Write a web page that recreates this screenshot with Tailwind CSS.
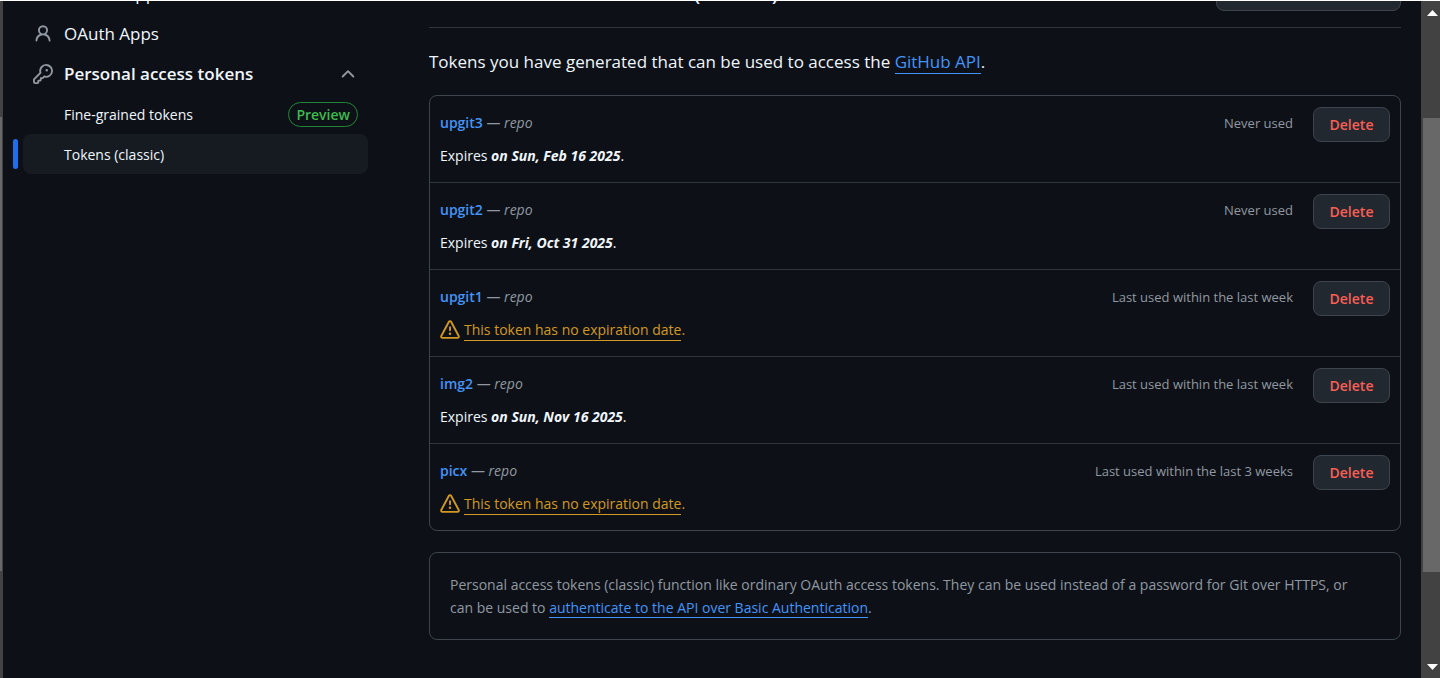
<!DOCTYPE html>
<html lang="en">
<head>
<meta charset="utf-8">
<title>Personal access tokens (classic)</title>
<script src="https://cdn.jsdelivr.net/npm/@tailwindcss/browser@4"></script>
</head>
<body class="flex h-screen flex-col overflow-hidden border-t border-white bg-[#0d1117] font-['Segoe_UI','Open_Sans',sans-serif] text-[14px] text-[#f0f6fc]">
<svg class="hidden">
  <symbol id="alert" viewBox="0 0 16 16"><path d="M6.457 1.047c.659-1.234 2.427-1.234 3.086 0l6.082 11.378A1.75 1.75 0 0 1 14.082 15H1.918a1.75 1.75 0 0 1-1.543-2.575Zm1.763.707a.25.25 0 0 0-.44 0L1.698 13.132a.25.25 0 0 0 .22.368h12.164a.25.25 0 0 0 .22-.368Zm.53 3.996v2.5a.75.75 0 0 1-1.5 0v-2.5a.75.75 0 0 1 1.5 0ZM9 11a1 1 0 1 1-2 0 1 1 0 0 1 2 0Z"/></symbol>
</svg>
<div class="flex min-h-0 flex-1">
  <div class="w-[3px] shrink-0 bg-[#424242] pt-[116px]"><div class="h-[454px] w-[2px] bg-[#686868]"></div></div>

  <nav class="w-[365px] shrink-0 overflow-hidden pl-5" aria-label="Developer settings">
    <ul class="-mt-[27px]">
      <li><a href="#" class="flex h-10 items-center pl-[41px] text-[17px]">GitHub Apps</a></li>
      <li><a href="#" class="flex h-10 items-center gap-[11px] pl-[10px] text-[17px]">
        <svg class="size-5 fill-[#9198a1]" viewBox="0 0 16 16"><path d="M10.561 8.073a6.005 6.005 0 0 1 3.432 5.142.75.75 0 1 1-1.498.07 4.5 4.5 0 0 0-8.99 0 .75.75 0 0 1-1.498-.07 6.004 6.004 0 0 1 3.431-5.142 3.999 3.999 0 1 1 5.123 0ZM10.5 5a2.5 2.5 0 1 0-5 0 2.5 2.5 0 0 0 5 0Z"/></svg>
        OAuth Apps</a></li>
      <li>
        <button class="flex h-10 w-full items-center gap-[11px] pr-[10px] pl-[10px] text-[17px] font-semibold" aria-expanded="true">
          <svg class="size-5 fill-[#9198a1]" viewBox="0 0 16 16"><path d="M10.5 0a5.499 5.499 0 1 1-1.288 10.848l-.932.932a.749.749 0 0 1-.53.22H7v.75a.749.749 0 0 1-.22.53l-.5.5a.749.749 0 0 1-.53.22H5v.75a.749.749 0 0 1-.22.53l-.5.5a.749.749 0 0 1-.53.22h-2A1.75 1.75 0 0 1 0 14.25v-2c0-.199.079-.389.22-.53l4.932-4.932A5.5 5.5 0 0 1 10.5 0Zm-4 5.5c-.001.431.069.86.205 1.269a.75.75 0 0 1-.181.768L1.5 12.56v1.69c0 .138.112.25.25.25h1.69l.06-.06v-1.19a.75.75 0 0 1 .75-.75h1.19l.06-.06v-1.19a.75.75 0 0 1 .75-.75h1.19l1.023-1.025a.75.75 0 0 1 .768-.18A4 4 0 1 0 6.5 5.5ZM11 6a1 1 0 1 1 0-2 1 1 0 0 1 0 2Z"/></svg>
          <span class="flex-1 text-left">Personal access tokens</span>
          <svg class="size-5 fill-[#9198a1]" viewBox="0 0 16 16"><path d="M3.22 10.53a.749.749 0 0 1 0-1.06l4.25-4.25a.749.749 0 0 1 1.06 0l4.25 4.25a.749.749 0 1 1-1.06 1.06L8 6.811 4.28 10.53a.749.749 0 0 1-1.06 0Z"/></svg>
        </button>
        <ul>
          <li><a href="#" class="flex h-10 items-center justify-between pr-[10px] pl-[41px]">Fine-grained tokens
            <span class="flex h-[25px] items-center rounded-full border border-[#238636] px-[7px] font-semibold text-[#3fb950]">Preview</span></a></li>
          <li class="relative"><span class="absolute top-[5px] -left-[10px] h-[30px] w-[5px] rounded-md bg-[#1f6feb]"></span>
            <a href="#" aria-current="page" class="flex h-10 items-center rounded-lg bg-[#161b22] pl-[41px]">Tokens (classic)</a></li>
        </ul>
      </li>
    </ul>
  </nav>

  <main class="min-w-0 flex-1 overflow-hidden pr-5 pl-[61px]">
    <div class="-mt-[25px] flex items-end justify-between border-b border-[#30363d] pb-4">
      <h1 class="pb-[6px] text-[24px] leading-7">Personal access tokens (classic)</h1>
      <button class="h-[35px] w-[185px] rounded-lg border border-[#3d444d] bg-[#212830] font-medium">Generate new token</button>
    </div>
    <p class="mt-[21px] text-[17px] leading-[26px]">Tokens you have generated that can be used to access the <a href="#" class="border-b border-[#4493f8] text-[#4493f8]">GitHub API</a>.</p>

    <ul class="mt-5 divide-y divide-[#30363d] rounded-lg border border-[#3d444d]">
      <li class="flex h-[87px] items-start p-[10px]">
        <div class="flex-1 pt-[5px]"><p class="leading-6 text-[#9198a1]"><a href="#" class="font-semibold text-[#4493f8]">upgit3</a> — <i>repo</i></p>
          <p class="mt-[9px] leading-6">Expires <i class="font-bold">on Sun, Feb 16 2025</i>.</p></div>
        <span class="mr-5 pt-[5px] text-[13px] leading-6 text-[#9198a1]">Never used</span>
        <button class="mt-px h-[35px] w-[77px] rounded-lg border border-[#3d444d] bg-[#212830] font-semibold text-[#fa5e55]">Delete</button>
      </li>
      <li class="flex h-[87px] items-start p-[10px]">
        <div class="flex-1 pt-[5px]"><p class="leading-6 text-[#9198a1]"><a href="#" class="font-semibold text-[#4493f8]">upgit2</a> — <i>repo</i></p>
          <p class="mt-[9px] leading-6">Expires <i class="font-bold">on Fri, Oct 31 2025</i>.</p></div>
        <span class="mr-5 pt-[5px] text-[13px] leading-6 text-[#9198a1]">Never used</span>
        <button class="mt-px h-[35px] w-[77px] rounded-lg border border-[#3d444d] bg-[#212830] font-semibold text-[#fa5e55]">Delete</button>
      </li>
      <li class="flex h-[87px] items-start p-[10px]">
        <div class="flex-1 pt-[5px]"><p class="leading-6 text-[#9198a1]"><a href="#" class="font-semibold text-[#4493f8]">upgit1</a> — <i>repo</i></p>
          <p class="mt-[9px] flex items-center leading-6 text-[#d29922]"><svg class="mr-1 size-5 fill-current"><use href="#alert"/></svg><a href="#" class="border-b border-current leading-5">This token has no expiration date</a>.</p></div>
        <span class="mr-5 pt-[5px] text-[13px] leading-6 text-[#9198a1]">Last used within the last week</span>
        <button class="mt-px h-[35px] w-[77px] rounded-lg border border-[#3d444d] bg-[#212830] font-semibold text-[#fa5e55]">Delete</button>
      </li>
      <li class="flex h-[87px] items-start p-[10px]">
        <div class="flex-1 pt-[5px]"><p class="leading-6 text-[#9198a1]"><a href="#" class="font-semibold text-[#4493f8]">img2</a> — <i>repo</i></p>
          <p class="mt-[9px] leading-6">Expires <i class="font-bold">on Sun, Nov 16 2025</i>.</p></div>
        <span class="mr-5 pt-[5px] text-[13px] leading-6 text-[#9198a1]">Last used within the last week</span>
        <button class="mt-px h-[35px] w-[77px] rounded-lg border border-[#3d444d] bg-[#212830] font-semibold text-[#fa5e55]">Delete</button>
      </li>
      <li class="flex h-[86px] items-start p-[10px]">
        <div class="flex-1 pt-[5px]"><p class="leading-6 text-[#9198a1]"><a href="#" class="font-semibold text-[#4493f8]">picx</a> — <i>repo</i></p>
          <p class="mt-[9px] flex items-center leading-6 text-[#d29922]"><svg class="mr-1 size-5 fill-current"><use href="#alert"/></svg><a href="#" class="border-b border-current leading-5">This token has no expiration date</a>.</p></div>
        <span class="mr-5 pt-[5px] text-[13px] leading-6 text-[#9198a1]">Last used within the last 3 weeks</span>
        <button class="mt-px h-[35px] w-[77px] rounded-lg border border-[#3d444d] bg-[#212830] font-semibold text-[#fa5e55]">Delete</button>
      </li>
    </ul>

    <p class="mt-[21px] rounded-lg border border-[#3d444d] py-5 pr-10 pl-5 leading-[23px] text-[#9198a1]">Personal access tokens (classic) function like ordinary OAuth access tokens. They can be used instead of a password for Git over HTTPS, or can be used to <a href="#" class="border-b border-[#4493f8] text-[#4493f8]">authenticate to the API over Basic Authentication</a>.</p>
  </main>

  <div class="flex w-[19px] shrink-0 flex-col items-end bg-[#424242]" aria-hidden="true">
    <svg class="h-[117px] w-[17px] fill-white" viewBox="0 0 17 117"><path d="M4 15 9.500 9 15 15Z"/></svg>
    <div class="h-[454px] w-[17px] bg-[#686868]"></div>
    <svg class="mt-auto h-[17px] w-[17px] fill-white" viewBox="0 0 17 17"><path d="M4 3 9.500 9 15 3Z"/></svg>
  </div>
</div>
</body>
</html>
